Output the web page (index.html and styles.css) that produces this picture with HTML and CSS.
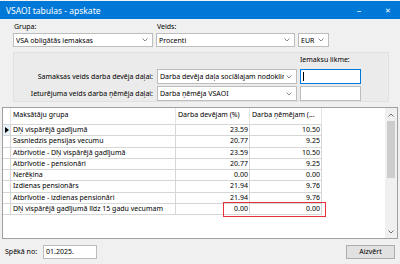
FILE: index.html
```html
<!DOCTYPE html>
<html lang="lv">
<head>
    <meta charset="UTF-8">
    <title>VSAOI tabulas - apskate</title>
    <link rel="stylesheet" href="styles.css">
</head>
<body>
    <div class="window">
        <div class="titlebar">
            <span class="title">VSAOI tabulas - apskate</span>
            <span class="ctl min">&ndash;</span>
            <span class="ctl close">&#x2715;</span>
        </div>

        <div class="top">
            <div class="field grupa">
                <div class="lbl">Grupa:</div>
                <div class="combo">
                    <span>VSA obligātās iemaksas</span>
                    <svg class="chev" width="6" height="4" viewBox="0 0 6 4"><path d="M0.5 0.5 L3 3 L5.5 0.5" fill="none" stroke="#6d6d6d" stroke-width="0.8"/></svg>
                </div>
            </div>
            <div class="field veids">
                <div class="lbl">Veids:</div>
                <div class="pair">
                    <div class="combo procenti">
                        <span>Procenti</span>
                        <svg class="chev" width="6" height="4" viewBox="0 0 6 4"><path d="M0.5 0.5 L3 3 L5.5 0.5" fill="none" stroke="#6d6d6d" stroke-width="0.8"/></svg>
                    </div>
                    <div class="combo eur">
                        <span>EUR</span>
                        <svg class="chev" width="6" height="4" viewBox="0 0 6 4"><path d="M0.5 0.5 L3 3 L5.5 0.5" fill="none" stroke="#6d6d6d" stroke-width="0.8"/></svg>
                    </div>
                </div>
            </div>
        </div>

        <div class="panel">
            <div></div>
            <div></div>
            <div class="lbl-top">Iemaksu likme:</div>

            <div class="lbl-right">Samaksas veids darba devēja daļai:</div>
            <div class="combo">
                <span>Darba devēja daļa sociālajam nodoklir</span>
                <svg class="chev" width="6" height="4" viewBox="0 0 6 4"><path d="M0.5 0.5 L3 3 L5.5 0.5" fill="none" stroke="#6d6d6d" stroke-width="0.8"/></svg>
            </div>
            <div class="txt focus"><span class="caret"></span></div>

            <div class="lbl-right">Ieturējuma veids darba ņēmēja daļai:</div>
            <div class="combo">
                <span>Darba ņēmēja VSAOI</span>
                <svg class="chev" width="6" height="4" viewBox="0 0 6 4"><path d="M0.5 0.5 L3 3 L5.5 0.5" fill="none" stroke="#6d6d6d" stroke-width="0.8"/></svg>
            </div>
            <div class="txt"></div>
        </div>

        <div class="grid">
            <div class="table">
                <div class="row head">
                    <div class="c rh"></div>
                    <div class="c c1">Maksātāju grupa</div>
                    <div class="c c2">Darba devējam (%)</div>
                    <div class="c c3">Darba ņēmējam (...</div>
                </div>
                <div class="row">
                    <div class="c rh sel"><svg width="4" height="6" viewBox="0 0 4 6"><path d="M0 0 L4 3 L0 6 Z" fill="#000"/></svg></div>
                    <div class="c c1">DŅ vispārējā gadījumā</div>
                    <div class="c c2 num">23.59</div>
                    <div class="c c3 num">10.50</div>
                </div>
                <div class="row">
                    <div class="c rh"></div>
                    <div class="c c1">Sasniedzis pensijas vecumu</div>
                    <div class="c c2 num">20.77</div>
                    <div class="c c3 num">9.25</div>
                </div>
                <div class="row">
                    <div class="c rh"></div>
                    <div class="c c1">Atbrīvotie - DŅ vispārējā gadījumā</div>
                    <div class="c c2 num">23.59</div>
                    <div class="c c3 num">10.50</div>
                </div>
                <div class="row">
                    <div class="c rh"></div>
                    <div class="c c1">Atbrīvotie - pensionāri</div>
                    <div class="c c2 num">20.77</div>
                    <div class="c c3 num">9.25</div>
                </div>
                <div class="row">
                    <div class="c rh"></div>
                    <div class="c c1">Nerēķina</div>
                    <div class="c c2 num">0.00</div>
                    <div class="c c3 num">0.00</div>
                </div>
                <div class="row">
                    <div class="c rh"></div>
                    <div class="c c1">Izdienas pensionārs</div>
                    <div class="c c2 num">21.94</div>
                    <div class="c c3 num">9.76</div>
                </div>
                <div class="row">
                    <div class="c rh"></div>
                    <div class="c c1">Atbrīvotie - izdienas pensionāri</div>
                    <div class="c c2 num">21.94</div>
                    <div class="c c3 num">9.76</div>
                </div>
                <div class="row marked">
                    <div class="c rh"></div>
                    <div class="c c1">DŅ vispārējā gadījumā līdz 15 gadu vecumam</div>
                    <div class="c c2 num">0.00</div>
                    <div class="c c3 num">0.00</div>
                    <div class="mark"></div>
                </div>
            </div>
            <div class="scroll">
                <svg class="arrow" width="6" height="4" viewBox="0 0 6 4"><path d="M0.5 3.5 L3 1 L5.5 3.5" fill="none" stroke="#606060" stroke-width="0.9"/></svg>
                <div class="thumb"></div>
                <div class="track"></div>
                <svg class="arrow" width="6" height="4" viewBox="0 0 6 4"><path d="M0.5 0.5 L3 3 L5.5 0.5" fill="none" stroke="#606060" stroke-width="0.9"/></svg>
            </div>
        </div>

        <div class="footer">
            <span class="lbl">Spēkā no:</span>
            <div class="txt date">01.2025.</div>
            <button class="btn">Aizvērt</button>
        </div>
    </div>
</body>
</html>
```

FILE: styles.css
```css
* {
    box-sizing: border-box;
}

body {
    margin: 0;
    width: 400px;
    height: 264px;
    overflow: hidden;
    font-family: "Noto Sans", sans-serif;
    font-size: 7px;
    color: #000;
    background-color: #f0f0f0;
}

.window {
    display: flex;
    flex-direction: column;
    height: 264px;
    padding-top: 1px;
}

.titlebar {
    display: flex;
    align-items: center;
    height: 18px;
    background-color: #0078d7;
    color: #fff;
    font-size: 8.5px;
    padding-left: 6px;
}

.title {
    flex: 1;
}

.ctl {
    text-align: center;
    font-size: 9px;
}

.ctl.min {
    width: 34px;
}

.ctl.close {
    width: 24px;
    font-size: 7px;
}

.top {
    display: flex;
    gap: 3px;
    padding: 1px 0 0 13px;
}

.lbl {
    line-height: 13px;
    padding-left: 1px;
}

.field.grupa .combo {
    width: 140px;
}

.pair {
    display: flex;
    gap: 3px;
}

.combo.procenti {
    width: 139px;
}

.combo.eur {
    width: 31px;
}

.combo {
    display: flex;
    align-items: center;
    height: 14px;
    background-color: #fff;
    border: 1px solid #bdbdbd;
    padding: 0 4px 0 2px;
    white-space: nowrap;
    overflow: hidden;
}

.combo span {
    flex: 1;
    overflow: hidden;
}

.chev {
    flex: none;
    margin-left: 2px;
}

.panel {
    display: grid;
    grid-template-columns: 140px 140px 61px;
    grid-template-rows: 14px 15px 15px;
    column-gap: 3px;
    row-gap: 2px;
    width: 376px;
    height: 50px;
    margin: 5px 0 0 13px;
    background-color: #ebebeb;
    border: 1px solid #e0e0e0;
}

.panel .combo {
    height: 15px;
}

.lbl-top {
    line-height: 14px;
}

.lbl-right {
    text-align: right;
    line-height: 15px;
    padding-right: 1px;
    white-space: nowrap;
}

.txt {
    height: 15px;
    background-color: #fff;
    border: 1px solid #bdbdbd;
    padding-left: 2px;
    display: flex;
    align-items: center;
}

.txt.focus {
    border-color: #0078d7;
}

.caret {
    width: 1px;
    height: 9px;
    background-color: #000;
}

.grid {
    display: flex;
    height: 132px;
    margin: 5px 2px 0 2px;
    border: 1px solid #a0a0a0;
    background-color: #fff;
}

.table {
    flex: 1;
}

.row {
    display: flex;
    height: 11.25px;
}

.row.head {
    height: 17px;
}

.c {
    border-right: 1px solid #d6d6d6;
    border-bottom: 1px solid #d6d6d6;
    white-space: nowrap;
    overflow: hidden;
    line-height: 10px;
    padding: 0 2px;
}

.head .c {
    line-height: 14px;
    border-right-color: #e5e5e5;
}

.rh {
    width: 8px;
    padding: 0;
    display: flex;
    align-items: center;
    justify-content: center;
}

.rh.sel {
    background-color: #e5f1fb;
}

.c1 {
    width: 165px;
}

.c2 {
    width: 74px;
}

.c3 {
    width: 72px;
}

.num {
    text-align: right;
    padding-right: 1px;
}

.row.marked {
    position: relative;
}

.mark {
    position: absolute;
    left: 220px;
    top: -2px;
    width: 103px;
    height: 15px;
    border: 1.5px solid #e8303a;
}

.scroll {
    width: 12px;
    display: flex;
    flex-direction: column;
    align-items: center;
    background-color: #f0f0f0;
}

.arrow {
    margin: 5px 0 4px;
}

.thumb {
    width: 8px;
    height: 57px;
    background-color: #cdcdcd;
}

.track {
    flex: 1;
}

.footer {
    display: flex;
    align-items: center;
    flex: 1;
    padding: 0 5px;
}

.footer .lbl {
    padding-left: 0;
    margin-right: 6px;
}

.txt.date {
    width: 54px;
    height: 14px;
}

.btn {
    margin-left: auto;
    width: 49px;
    height: 14px;
    padding: 0;
    font-family: inherit;
    font-size: 7px;
    color: #000;
    background-color: #e1e1e1;
    border: 1px solid #adadad;
    border-radius: 0;
}
```
